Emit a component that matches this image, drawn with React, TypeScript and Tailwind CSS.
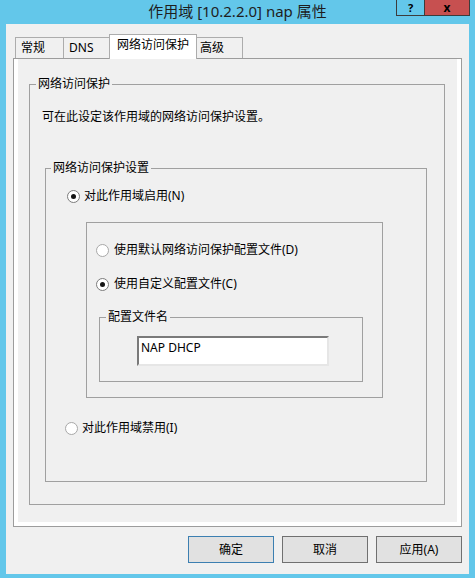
import React from "react";

const Radio = ({ checked }: { checked?: boolean }) =>
  checked ? (
    <span className="w-[13px] h-[13px] rounded-full border border-[#7c7c7c] bg-white flex items-center justify-center shrink-0">
      <span className="w-[5px] h-[5px] rounded-full bg-[#141414]" />
    </span>
  ) : (
    <span className="w-[13px] h-[13px] rounded-full border border-[#a8a8a8] bg-white shrink-0" />
  );

export default function App() {
  return (
    <div className="w-[475px] h-[578px] bg-[#63c7ea] flex flex-col font-['Noto_Sans','Noto_Sans_CJK_SC',sans-serif] text-[12px] leading-[16px] text-black">
      {/* Title bar */}
      <div className="h-[24px] grid grid-cols-[1fr_auto_1fr] items-start">
        <div />
        <div className="h-[24px] flex items-center pb-[2px] text-[15px] text-[#1e1e1e]">
          作用域 [10.2.2.0] nap 属性
        </div>
        <div className="flex justify-end pr-[5px]">
          <div className="w-[28px] h-[16px] border-l border-b border-[#3c3c3c] flex items-center justify-center">
            <span className="font-bold text-[11px] leading-[12px] text-black">?</span>
          </div>
          <div className="w-[46px] h-[16px] border-l border-r border-b border-[#3c3c3c] bg-[#c75050] flex items-center justify-center">
            <span className="font-bold text-[12px] leading-[12px] text-black">x</span>
          </div>
        </div>
      </div>

      {/* Client area */}
      <div className="mx-[6px] mb-[4px] flex-1 bg-[#f0f0f0] flex flex-col px-[7px] pt-[10px]">
        {/* Tabs */}
        <div className="h-[24px] flex items-end pl-[2px] relative z-10">
          <div className="w-[48px] h-[21px] border-l border-t border-[#acacac] bg-[#f0f0f0] pl-[5px] pt-[2px]">常规</div>
          <div className="w-[46px] h-[21px] border-l border-t border-[#acacac] bg-[#f0f0f0] pl-[5px] pt-[2px]">DNS</div>
          <div className="w-[88px] h-[25px] -mb-[1px] border-l border-t border-r border-[#acacac] bg-white pl-[7px] pt-[2px]">网络访问保护</div>
          <div className="w-[46px] h-[21px] border-t border-r border-[#acacac] bg-[#f0f0f0] pl-[3px] pt-[2px]">高级</div>
        </div>

        {/* Panel */}
        <div className="h-[469px] border border-[#9c9c9c] bg-white px-[4px] pb-[4px] flex flex-col">
          <div className="flex-1 bg-[#f0f0f0] flex flex-col">
            <fieldset className="ml-[11px] mt-[17px] w-[416px] h-[429px] border border-[#a0a0a0]">
              <legend className="ml-[6px] px-[2px] leading-[16px]">网络访问保护</legend>
              <div className="mt-[17px] ml-[12px]">可在此设定该作用域的网络访问保护设置。</div>

              <fieldset className="ml-[15px] mt-[35px] w-[382px] h-[322px] border border-[#a0a0a0]">
                <legend className="ml-[5px] px-[2px] leading-[16px]">网络访问保护设置</legend>

                <div className="mt-[12px] ml-[21px] h-[16px] flex items-center gap-[4px]">
                  <Radio checked />
                  <span>对此作用域启用(N)</span>
                </div>

                <div className="mt-[18px] ml-[40px] w-[297px] h-[176px] border border-[#a0a0a0] flex flex-col">
                  <div className="mt-[19px] ml-[9px] h-[16px] flex items-center gap-[5px]">
                    <Radio />
                    <span>使用默认网络访问保护配置文件(D)</span>
                  </div>
                  <div className="mt-[18px] ml-[9px] h-[16px] flex items-center gap-[5px]">
                    <Radio checked />
                    <span>使用自定义配置文件(C)</span>
                  </div>
                  <fieldset className="ml-[12px] mt-[17px] w-[264px] h-[73px] border border-[#a0a0a0]">
                    <legend className="ml-[6px] px-[2px] leading-[16px]">配置文件名</legend>
                    <div className="ml-[37px] mt-[11px] w-[192px] h-[30px] bg-white border-2 border-t-[#7a7a7a] border-l-[#7a7a7a] border-r-[#e6e6e6] border-b-[#e6e6e6] pl-[2px] pt-[2px] leading-[16px]">
                      NAP DHCP
                    </div>
                  </fieldset>
                </div>

                <div className="mt-[22px] ml-[19px] h-[16px] flex items-center gap-[4px]">
                  <Radio />
                  <span>对此作用域禁用(I)</span>
                </div>
              </fieldset>
            </fieldset>
          </div>
        </div>

        {/* Buttons */}
        <div className="mt-[9px] flex justify-end gap-[8px]">
          <div className="w-[86px] h-[27px] bg-[#e1e1e1] border border-[#3c7fb1] flex items-center justify-center">确定</div>
          <div className="w-[86px] h-[27px] bg-[#e1e1e1] border border-[#707070] flex items-center justify-center">取消</div>
          <div className="w-[86px] h-[27px] bg-[#e1e1e1] border border-[#707070] flex items-center justify-center">应用(A)</div>
        </div>
      </div>
    </div>
  );
}
